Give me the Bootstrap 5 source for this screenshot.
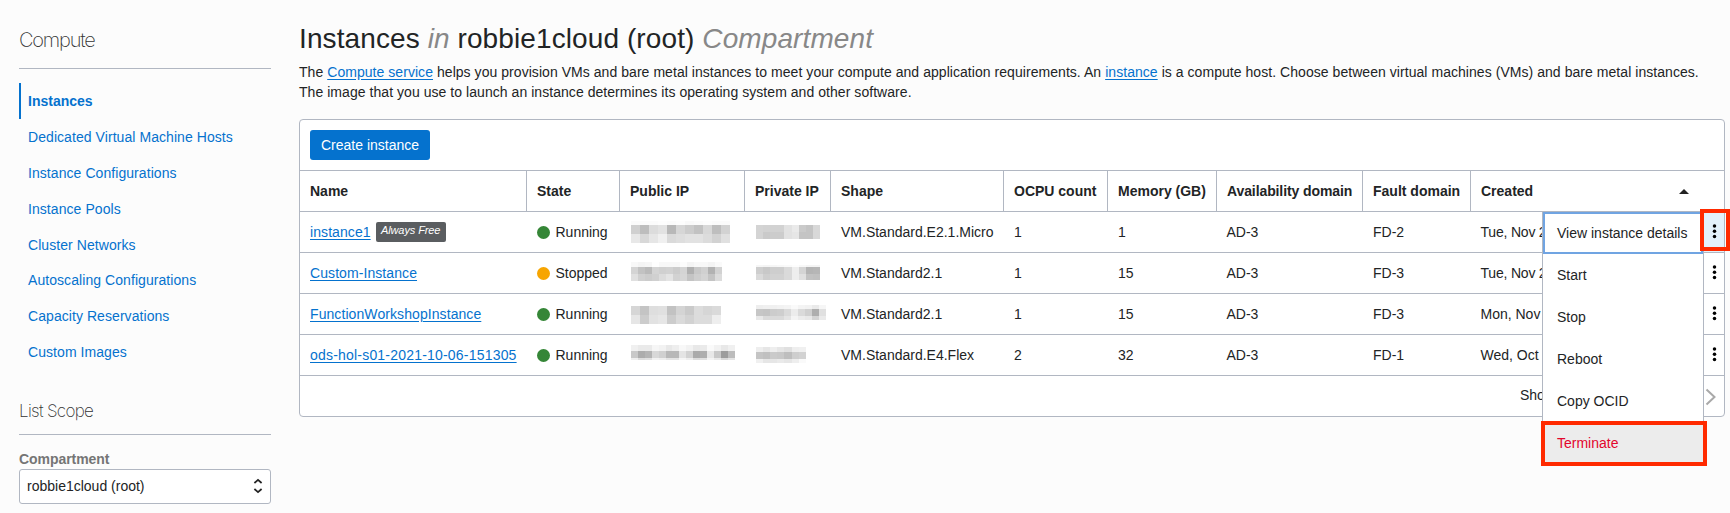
<!DOCTYPE html>
<html lang="en">
<head>
<meta charset="utf-8">
<title>Instances</title>
<link rel="stylesheet" href="https://cdn.jsdelivr.net/npm/bootstrap@5.3.0/dist/css/bootstrap.min.css">
<style>
  :root { --line: #b1b7c2; --blue: #0572ce; --ink: #222425; --alert: #ff2a00; }
  body { font: 14px/20px "Liberation Sans", Arial, sans-serif; color: var(--ink); background: #fcfcfc; height: 513px; overflow: hidden; }
  a { color: var(--blue); text-underline-offset: 2px; }
  .side { width: 252px; margin-left: 19px; flex: none; }
  .side-title { font-family: Inter, sans-serif; font-weight: 200; color: #333; margin: 0; border-bottom: 1px solid var(--line); }
  .side-title.big { font-size: 20px; letter-spacing: -1.2px; height: 69px; padding-top: 28px; }
  .side-title.scope { font-size: 17px; letter-spacing: -.68px; margin-top: 31px; height: 34px; margin-bottom: 14px; }
  .side-nav { margin-top: 14px; }
  .side-nav .nav-link { height: 35.75px; line-height: 36px; padding: 0 0 0 9px; color: var(--blue); letter-spacing: .065px; }
  .side-nav .nav-link.active { border-left: 2px solid var(--blue); padding-left: 7px; font-weight: bold; letter-spacing: 0; height: 36.4px; line-height: 37px; }
  .field-label { display: block; font-weight: bold; color: #757575; letter-spacing: -.05px; line-height: 20px; }
  .picker { height: 35px; border: 1px solid var(--line); border-radius: 3px; background: #fff; padding: 0 7px; }
  .content-area { margin-left: 28px; width: 1426px; flex: none; }
  .heading { font-size: 28px; font-weight: 400; line-height: 34px; margin: 22px 0 6px; letter-spacing: .1px; color: var(--ink); }
  .heading em { color: #888; }
  .intro { letter-spacing: .05px; margin: 0 0 17px; white-space: nowrap; }
  .panel { border: 1px solid var(--line); border-radius: 4px; background: #fff; height: 298px; }
  .toolbar { height: 50px; padding: 0 10px; }
  .btn-create { --bs-btn-bg: var(--blue); --bs-btn-color: #fff; height: 30px; width: 120px; padding: 0; font-size: 14px; line-height: 28px; border-radius: 3px; border: 0; }
  .grid { table-layout: fixed; width: 1424px; border-collapse: separate; border-spacing: 0; margin: 0; }
  .grid th, .grid td { height: 41px; padding: 0 0 0 11px; border-top: 1px solid var(--line); white-space: nowrap; vertical-align: middle; text-align: left; }
  .grid th { border-left: 1px solid var(--line); padding-left: 10px; }
  .grid th:nth-child(8) { letter-spacing: -.1px; }
  .grid th:first-child { border-left: 0; }
  .grid td:first-child { padding-left: 10px; letter-spacing: .08px; }
  .grid td:nth-child(8), .grid td:nth-child(10) { padding-left: 10.5px; }
  .grid td.more, .grid td.masked { padding: 0; }
  .grid td.more { border-left: 1px solid var(--line); }
  .masked svg, .more svg { display: block; }
  .wide { letter-spacing: .2px; }
  .snug { letter-spacing: -.2px; }
  .tag-free { background: #5a5d60; color: #fff; font: italic 11px/16px "Liberation Sans", Arial, sans-serif; letter-spacing: -.1px; height: 20px; width: 70px; text-align: center; border-radius: 2px; margin-left: 5px; margin-top: -1px; }
  .dot { width: 13px; height: 13px; border-radius: 50%; background: #358637; margin-right: 5.5px; }
  .dot.off { background: #f7a501; }
  .foot { height: 41px; border-top: 1px solid var(--line); padding: 0 8px 2px 0; }
  .foot-count { width: 185px; }
  .menu { left: 1242px; top: 91px; width: 162px; min-width: 0; height: 254px; padding: 0; border: 1px solid var(--line); border-radius: 0; font-size: 14px; }
  .menu .dropdown-item { height: 42px; line-height: 40px; padding: 1px 0 0 14px; color: var(--ink); }
  .menu .dropdown-item.focus-item { border: 2px solid #70a4e2; padding: 0 0 0 12px; line-height: 39px; }
  .menu .dropdown-item.end-item { background: #ececec; color: #e3062c; height: 43px; }
  .callout { border: 4px solid var(--alert); pointer-events: none; z-index: 1100; }
  .callout.on-more { left: 1400px; top: 89px; width: 30px; height: 42px; }
  .callout.on-end { left: 1241px; top: 301px; width: 166px; height: 45px; }
  .more.open { background: #e3f1fb; }
</style>
</head>
<body>
<div class="d-flex">
  <aside class="side">
    <h2 class="side-title big">Compute</h2>
    <nav class="nav flex-column side-nav">
      <a class="nav-link active" href="#">Instances</a>
      <a class="nav-link" href="#">Dedicated Virtual Machine Hosts</a>
      <a class="nav-link" href="#">Instance Configurations</a>
      <a class="nav-link" href="#">Instance Pools</a>
      <a class="nav-link" href="#">Cluster Networks</a>
      <a class="nav-link" href="#">Autoscaling Configurations</a>
      <a class="nav-link" href="#">Capacity Reservations</a>
      <a class="nav-link" href="#">Custom Images</a>
    </nav>
    <h2 class="side-title scope">List Scope</h2>
    <span class="field-label">Compartment</span>
    <div class="picker d-flex align-items-center justify-content-between">
      <span>robbie1cloud (root)</span>
      <svg width="10" height="16" viewBox="0 0 10 16" fill="none" stroke="#222" stroke-width="1.7"><path d="M1.4 5 5 1.8 8.6 5M1.4 11 5 14.2 8.6 11"/></svg>
    </div>
  </aside>

  <main class="content-area">
    <h1 class="heading">Instances <em>in</em> robbie1cloud (root) <em>Compartment</em></h1>
    <p class="intro">The <a href="#">Compute service</a> helps you provision VMs and bare metal instances to meet your compute and application requirements. An <a href="#">instance</a> is a compute host. Choose between virtual machines (VMs) and bare metal instances.<br>The image that you use to launch an instance determines its operating system and other software.</p>

    <section class="panel position-relative">
      <div class="toolbar d-flex align-items-center"><button class="btn btn-create">Create instance</button></div>
      <table class="grid">
        <colgroup><col style="width:226px"><col style="width:93px"><col style="width:125px"><col style="width:86px"><col style="width:173px"><col style="width:104px"><col style="width:109px"><col style="width:146px"><col style="width:108px"><col style="width:233px"><col style="width:21px"></colgroup>
        <thead>
          <tr><th>Name</th><th>State</th><th>Public IP</th><th>Private IP</th><th>Shape</th><th>OCPU count</th><th>Memory (GB)</th><th>Availability domain</th><th>Fault domain</th>
          <th colspan="2"><div class="d-flex align-items-center justify-content-between"><span>Created</span><svg width="45" height="5" viewBox="0 0 45 5"><path d="M0 5 5 0 10 5z" fill="#222"/></svg></div></th></tr>
        </thead>
        <tbody id="rows"></tbody>
      </table>
      <div class="foot d-flex align-items-center justify-content-end">
        <span class="foot-count">Sho</span>
        <svg class="mt-1" width="11" height="18" viewBox="0 0 11 18" fill="none" stroke="#a9a9a9" stroke-width="2"><path d="M1.5 1.5 9.5 9 1.5 16.5"/></svg>
      </div>

      <div class="dropdown-menu show menu">
        <a class="dropdown-item focus-item" href="#">View instance details</a>
        <a class="dropdown-item" href="#">Start</a>
        <a class="dropdown-item" href="#">Stop</a>
        <a class="dropdown-item" href="#">Reboot</a>
        <a class="dropdown-item" href="#">Copy OCID</a>
        <a class="dropdown-item end-item" href="#">Terminate</a>
      </div>
      <div class="callout on-more position-absolute"></div>
      <div class="callout on-end position-absolute"></div>
    </section>
  </main>
</div>

<script src="https://cdn.jsdelivr.net/npm/bootstrap@5.3.0/dist/js/bootstrap.bundle.min.js"></script>
<script>
  // Redacted addresses: bands of [top, height, grey levels], each cell w wide
  const rows = [
    { name: 'instance1', free: true, state: 'Running', shape: 'VM.Standard.E2.1.Micro', cpu: 1, mem: 1, fd: 'FD-2', made: 'Tue, Nov 2',
      pub: [9, [[9,4,'fb fb fb fd fb fd f9 fb fd fb fb'],[13,9,'d0 bd dc e2 b8 d6 cc c2 d8 be d2'],[22,9,'e8 d8 e6 f0 da de e2 e2 dc d2 e0']]],
      priv: [7.1, [[13,7,'d4 d2 d2 d2 e2 ea ca c4 d8'],[20,7,'d4 ca cc cc e2 e6 c4 c4 d8']]] },
    { name: 'Custom-Instance', state: 'Stopped', shape: 'VM.Standard2.1', cpu: 1, mem: 15, fd: 'FD-3', made: 'Tue, Nov 2',
      pub: [7, [[9,5,'f8 f4 f6 fe f8 f8 f8 fc f4 f8 f8 f4 fa'],[14,7,'d4 c2 ba d4 d0 d2 cc d4 b0 c8 d0 b2 d2'],[21,7,'e0 d0 cc d0 dc e4 d2 d6 c4 ce d4 c4 dc']]],
      priv: [7.1, [[12,2,'f6 f4 f6 f8 fa fd f8 f4 f4'],[14,7,'ce c8 ce ce da ee d4 b4 b6'],[21,6,'da ce d2 d2 da ee e0 c2 c0']]] },
    { name: 'FunctionWorkshopInstance', state: 'Running', shape: 'VM.Standard2.1', cpu: 1, mem: 15, fd: 'FD-3', made: 'Mon, Nov',
      pub: [9, [[12,9,'d6 c4 de e0 c2 d4 ca dc d6 da'],[21,9,'e6 cc e2 e6 cc da d2 dc dc ee']]],
      priv: [7, [[11,4,'ee f0 f0 f2 f4 fa f4 f2 ea f6'],[15,7,'c6 c4 cc ce da ec da d0 ae e0'],[22,4,'e8 da da da e4 f4 ec e8 d4 ea']]] },
    { name: 'ods-hol-s01-2021-10-06-151305', wide: true, state: 'Running', shape: 'VM.Standard.E4.Flex', cpu: 2, mem: 32, fd: 'FD-1', made: 'Wed, Oct',
      pub: [6.9, [[10,6,'f0 ea ea f6 f2 e8 ee f8 f2 e8 ea fa f2 e8 f0'],[16,7,'c8 ac b4 d8 d0 b8 b8 e4 d2 aa ae e8 c8 9c bc'],[23,2,'ee dc e0 f2 ee e4 e4 f6 ee dc e0 f4 ea d8 e4']]],
      priv: [7.1, [[12,5,'ee e6 ee e6 e0 ee f0'],[17,7,'c4 c0 ca c8 be ce d2'],[24,4,'f0 e6 e6 ea e6 ee fa']]] }
  ];
  const mosaic = ([w, bands], x0) => '<svg width="' + (x0 + 110) + '" height="40" shape-rendering="crispEdges">' +
    bands.map(([y, h, g]) => g.split(' ').map((v, i) =>
      `<rect x="${x0 + i * w}" y="${y}" width="${w}" height="${h}" fill="#${v}${v}${v}"/>`).join('')).join('') + '</svg>';
  document.getElementById('rows').innerHTML = rows.map(r => `<tr>
    <td><div class="d-flex align-items-center"><a href="#" class="${r.wide ? 'wide' : ''}">${r.name}</a>${r.free ? '<span class="tag-free">Always Free</span>' : ''}</div></td>
    <td><div class="d-flex align-items-center"><span class="dot ${r.state === 'Stopped' ? 'off' : ''}"></span>${r.state}</div></td>
    <td class="masked">${mosaic(r.pub, 12)}</td><td class="masked overflow-hidden">${mosaic(r.priv, 12)}</td>
    <td>${r.shape}</td><td>${r.cpu}</td><td>${r.mem}</td><td>AD-3</td><td>${r.fd}</td><td><span class="${r.made[0] === 'T' ? 'snug' : ''}">${r.made}</span></td>
    <td class="more ${r.free ? 'open' : ''}"><svg width="20" height="40"><circle cx="10.5" cy="14" r="1.75"/><circle cx="10.5" cy="19.3" r="1.75"/><circle cx="10.5" cy="24.6" r="1.75"/></svg></td></tr>`).join('');
</script>
</body>
</html>
